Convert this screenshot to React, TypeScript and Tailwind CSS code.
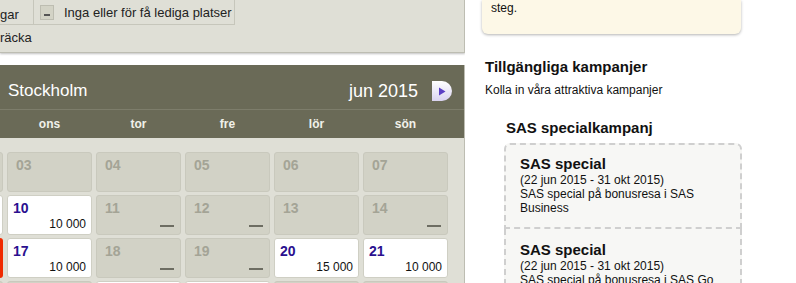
import React from 'react';

type Day = { d: string; kind: 'free' | 'full' | 'red'; price?: string; dash?: boolean; hidden?: boolean };

// första kolumnen och sista raden ligger nästan helt utanför bild, bara kanten syns
const rows: Day[][] = [
  [
    { d: '02', kind: 'full', hidden: true },
    { d: '03', kind: 'full' },
    { d: '04', kind: 'full' },
    { d: '05', kind: 'full' },
    { d: '06', kind: 'full' },
    { d: '07', kind: 'full' },
  ],
  [
    { d: '09', kind: 'free', price: '10 000', hidden: true },
    { d: '10', kind: 'free', price: '10 000' },
    { d: '11', kind: 'full', dash: true },
    { d: '12', kind: 'full', dash: true },
    { d: '13', kind: 'full' },
    { d: '14', kind: 'full', dash: true },
  ],
  [
    { d: '16', kind: 'red', hidden: true },
    { d: '17', kind: 'free', price: '10 000' },
    { d: '18', kind: 'full', dash: true },
    { d: '19', kind: 'full', dash: true },
    { d: '20', kind: 'free', price: '15 000' },
    { d: '21', kind: 'free', price: '10 000' },
  ],
  [
    { d: '23', kind: 'full', hidden: true },
    { d: '24', kind: 'full', hidden: true },
    { d: '25', kind: 'free', hidden: true },
    { d: '26', kind: 'free', hidden: true },
    { d: '27', kind: 'full', hidden: true },
    { d: '28', kind: 'full', hidden: true },
  ],
];

const weekdays = ['', 'ons', 'tor', 'fre', 'lör', 'sön'];

function Cell({ day }: { day: Day }) {
  if (day.kind === 'red') {
    return <div className="h-[40px] rounded-[3px] bg-[#f02a00]" />;
  }
  if (day.kind === 'free') {
    return (
      <div className="h-[40px] rounded-[3px] bg-white border border-[#cfcfc4] px-[5px] pt-[4px] flex flex-col">
        {!day.hidden && (
          <>
            <span className="text-[14px] leading-[16px] font-bold text-[#2a108f]">{day.d}</span>
            <span className="text-[12px] leading-[14px] text-[#111] text-right mt-auto mb-[3px]">{day.price}</span>
          </>
        )}
      </div>
    );
  }
  return (
    <div className="h-[40px] rounded-[3px] bg-[#d2d2c6] border border-[#c9c9bd] pl-[8px] pr-[5px] pt-[4px] flex flex-col">
      {!day.hidden && <span className="text-[14px] leading-[16px] font-bold text-[#a4a496]">{day.d}</span>}
      {day.dash && <span className="mt-auto mb-[7px] ml-auto mr-[1px] w-[14px] h-[2px] bg-[#6d6d62]" />}
    </div>
  );
}

export default function App() {
  return (
    <div className="w-[796px] h-[283px] overflow-hidden bg-white flex" style={{ fontFamily: '"Liberation Sans", Arial, sans-serif' }}>
      {/* vänster: kalender */}
      <div className="w-[465px] shrink-0 overflow-hidden">
        <div className="h-[53px] bg-[#dfdfd6] border-b border-r border-[#bdbdb2] shadow-[0_1px_2px_rgba(0,0,0,0.25)] text-[13px] text-[#222]">
          <div className="flex h-[25px] w-[235px] border-b border-r border-[#c6c6bb]">
            <div className="w-[34px] pt-[5px] border-r border-[#c6c6bb]">gar</div>
            <div className="flex items-start pl-[6px] pt-[5px] gap-[10px]">
              <span className="w-[14px] h-[15px] bg-[#d3d3c6] border border-[#bdbdb1] flex items-end justify-center pb-[3px]">
                <span className="w-[6px] h-[2px] bg-[#555]" />
              </span>
              <span className="leading-[15px]">Inga eller för få lediga platser</span>
            </div>
          </div>
          <div className="pt-[5px] leading-[15px]">räcka</div>
        </div>

        <div className="mt-[12px] bg-[#dfdfd6] border-r border-[#bdbdb2] h-[220px]">
          <div className="bg-[#6a6a57]">
            <div className="h-[45px] flex items-center pl-[8px] pr-[12px] border-b border-[#7d7d6b]">
              <span className="text-white text-[17px] mt-[8px]">Stockholm</span>
              <span className="ml-auto text-white text-[18px] mt-[8px]">jun 2015</span>
              <span className="ml-[14px] mt-[8px] w-[20px] h-[20px] rounded-r-full rounded-l-[3px] bg-gradient-to-b from-[#ffffff] to-[#d9d3f0] flex items-center justify-center">
                <svg width="8" height="9" viewBox="0 0 8 9"><path d="M1 0.5 L7.5 4.5 L1 8.5 Z" fill="#5b3fc4" /></svg>
              </span>
            </div>
            <div className="h-[28px] ml-[-82px] grid grid-cols-[repeat(6,85px)] gap-x-[4px] items-center">
              {weekdays.map((w, i) => (
                <span key={i} className="text-center text-[12px] font-bold text-[#f1f1ea]">{w}</span>
              ))}
            </div>
          </div>
          <div className="pt-[14px] ml-[-82px] grid grid-cols-[repeat(6,85px)] gap-x-[4px] gap-y-[3px]">
            {rows.flat().map((day) => (
              <Cell key={day.d} day={day} />
            ))}
          </div>
        </div>
      </div>

      {/* höger: kampanjer */}
      <div className="flex-1 pl-[17px] text-[#111]">
        <div className="w-[259px] h-[34px] bg-[#fdf8e7] rounded-b-[6px] shadow-[0_1px_3px_rgba(0,0,0,0.3)] pl-[9px] pt-[1px] text-[12px] leading-[14px]">
          steg.
        </div>
        <h2 className="mt-[24px] ml-[3px] text-[15px] leading-[18px] font-bold">Tillgängliga kampanjer</h2>
        <p className="mt-[7px] ml-[3px] text-[12px] leading-[14px]">Kolla in våra attraktiva kampanjer</p>
        <h3 className="mt-[22px] ml-[24px] text-[15px] leading-[18px] font-bold">SAS specialkampanj</h3>
        <div className="mt-[6px] ml-[22px] w-[238px]">
          <div className="bg-[#f7f7f5] border-2 border-dashed border-[#cfcfcf] rounded-t-[6px] h-[86px] pl-[14px] pt-[10px]">
            <div className="text-[15px] leading-[18px] font-bold">SAS special</div>
            <div className="text-[12px] leading-[14px]">(22 jun 2015 - 31 okt 2015)</div>
            <div className="text-[12px] leading-[14px] w-[190px]">SAS special på bonusresa i SAS Business</div>
          </div>
          <div className="bg-[#f7f7f5] border-2 border-t-0 border-dashed border-[#cfcfcf] h-[86px] pl-[14px] pt-[12px]">
            <div className="text-[15px] leading-[18px] font-bold">SAS special</div>
            <div className="text-[12px] leading-[14px]">(22 jun 2015 - 31 okt 2015)</div>
            <div className="text-[12px] leading-[14px] w-[200px]">SAS special på bonusresa i SAS Go</div>
          </div>
        </div>
      </div>
    </div>
  );
}
